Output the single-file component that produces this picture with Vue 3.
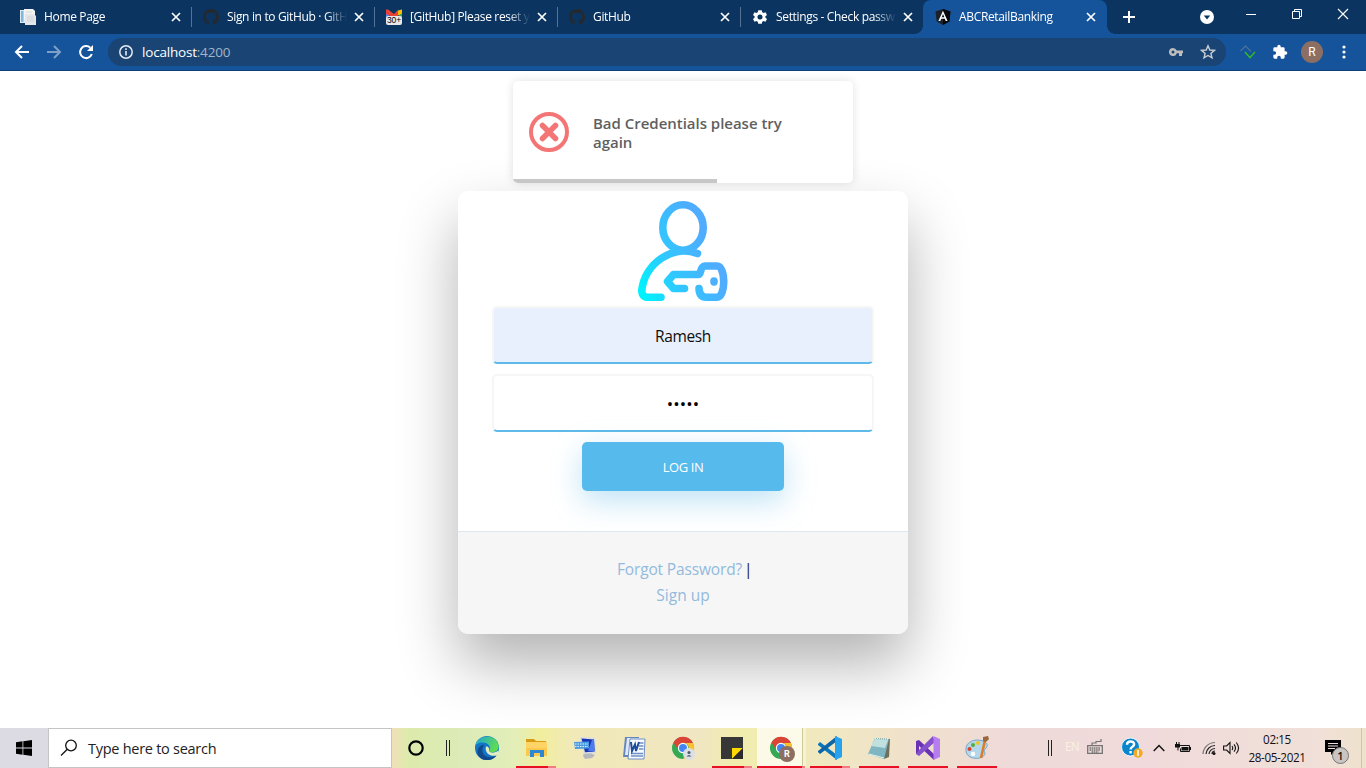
<script setup>
import { ref } from 'vue'

const tabs = [
  { title: 'Home Page', icon: 'page' },
  { title: 'Sign in to GitHub · GitH', icon: 'github' },
  { title: '[GitHub] Please reset y', icon: 'gmail' },
  { title: 'GitHub', icon: 'github' },
  { title: 'Settings - Check passw', icon: 'gear' },
  { title: 'ABCRetailBanking', icon: 'angular', active: true },
]
const user = ref('Ramesh')
const password = ref('admin')
</script>

<template>
  <div class="screen">
    <header class="tabstrip">
      <div v-for="(t, i) in tabs" :key="i" class="tab" :class="{ active: t.active, sep: i < 4 }">
        <svg v-if="t.icon === 'page'" class="fav" viewBox="0 0 16 16">
          <path d="M0 1h8v13H0z" fill="#dfe9f0" /><path d="M1 2h2.500v11H1z" fill="#7db7e2" />
          <path d="M4 0h9l2 2v9H4z" fill="#f4f4f4" /><path d="M5 5h9l2 2v9H5z" fill="#e4e6e8" />
          <path d="M7 8h7M7 10h7M7 12h7M6 3h6" stroke="#d3d6da" />
        </svg>
        <svg v-else-if="t.icon === 'github'" class="fav" viewBox="0 0 16 16">
          <path fill="#24292e" d="M8 0C3.58 0 0 3.58 0 8c0 3.54 2.29 6.53 5.47 7.59.4.07.55-.17.55-.38 0-.19-.01-.82-.01-1.49-2.01.37-2.53-.49-2.69-.94-.09-.23-.48-.94-.82-1.13-.28-.15-.68-.52-.01-.53.63-.01 1.08.58 1.23.82.72 1.21 1.87.87 2.33.66.07-.52.28-.87.51-1.07-1.78-.2-3.64-.89-3.64-3.95 0-.87.31-1.59.82-2.15-.08-.2-.36-1.02.08-2.12 0 0 .67-.21 2.2.82.64-.18 1.32-.27 2-.27s1.36.09 2 .27c1.53-1.04 2.2-.82 2.2-.82.44 1.1.16 1.92.08 2.12.51.56.82 1.27.82 2.15 0 3.07-1.87 3.75-3.65 3.95.29.25.54.73.54 1.48 0 1.07-.01 1.93-.01 2.2 0 .21.15.46.55.38A8.01 8.01 0 0 0 16 8c0-4.42-3.58-8-8-8z" />
        </svg>
        <span v-else-if="t.icon === 'gmail'" class="gmail">
          <svg class="fav" viewBox="0 0 16 16">
            <path d="M0 3h3v8H0z" fill="#4285f4" /><path d="M13 3h3v8h-3z" fill="#34a853" />
            <path d="M12 1.500l4-1v4l-4 2z" fill="#fbbc04" /><path d="M0 .5h2L8 5l4-4v6L8 9 0 5z" fill="#ea4335" />
          </svg>
          <b>30+</b>
        </span>
        <svg v-else-if="t.icon === 'gear'" class="fav" viewBox="0 0 24 24">
          <path fill="#fff" d="M20.100 13.200a8 8 0 0 0 0-2.400l2.400-1.900-2.300-4-2.900 1.200a8 8 0 0 0-2.100-1.200L14.700 2H9.300l-.5 2.900a8 8 0 0 0-2.100 1.200L3.800 4.900l-2.300 4 2.400 1.900a8 8 0 0 0 0 2.400l-2.400 1.900 2.300 4 2.900-1.200a8 8 0 0 0 2.100 1.200l.5 2.900h5.400l.5-2.900a8 8 0 0 0 2.100-1.200l2.900 1.200 2.300-4zM12 15.800a3.800 3.800 0 1 1 0-7.600 3.800 3.800 0 0 1 0 7.600z" />
        </svg>
        <svg v-else class="fav" viewBox="0 0 16 16">
          <path d="M8 0l7.500 2.600-1.200 10L8 16l-6.300-3.400-1.200-10z" fill="#1d2127" /><path d="M8 0l7.500 2.600-1.200 10L8 16z" fill="#05070a" />
          <path d="M8 1.700L3.400 12h1.900l.9-2.300h3.600l.9 2.300h1.900zm0 3.300l1.300 3.200H6.700z" fill="#fff" />
        </svg>
        <span class="title">{{ t.title }}</span>
        <svg class="close" viewBox="0 0 10 10"><path d="M1 1l8 8M9 1l-8 8" stroke="#fff" stroke-width="1.700" /></svg>
      </div>
      <svg class="plus" viewBox="0 0 12 12"><path d="M6 0v12M0 6h12" stroke="#fff" stroke-width="2" /></svg>
      <div class="winctl">
        <svg class="c-drop" viewBox="0 0 14 14"><circle cx="7" cy="7" r="7" fill="#fff" /><path d="M3.800 5.500h6.400L7 9.500z" fill="#0b3560" /></svg>
        <svg class="c-win" viewBox="0 0 12 12"><path d="M1 6.500h10" stroke="#fff" /></svg>
        <svg class="c-win" viewBox="0 0 12 12"><path d="M1.500 3.500h7v7h-7zM3.500 3V1.500h7v7H9" fill="none" stroke="#fff" /></svg>
        <svg class="c-win" viewBox="0 0 12 12"><path d="M1 1l10 10M11 1L1 11" stroke="#fff" stroke-width="1.100" /></svg>
      </div>
    </header>

    <nav class="toolbar">
      <svg class="nav" viewBox="0 0 16 16"><path d="M15 8H2M8 2L2 8l6 6" fill="none" stroke="#fff" stroke-width="2" /></svg>
      <svg class="nav" viewBox="0 0 16 16"><path d="M1 8h13M8 2l6 6-6 6" fill="none" stroke="#7fa0c8" stroke-width="2" /></svg>
      <svg class="nav" viewBox="0 0 16 16"><path d="M13.800 10A6 6 0 1 1 12.300 3.800" fill="none" stroke="#fff" stroke-width="2" /><path d="M15 1v6H9z" fill="#fff" /></svg>
      <div class="omnibox">
        <svg class="info" viewBox="0 0 14 14"><circle cx="7" cy="7" r="6.200" fill="none" stroke="#e6ebf1" stroke-width="1.500" /><path d="M7 6v4.500M7 3.300v1.600" stroke="#e6ebf1" stroke-width="1.600" /></svg>
        <span class="url">localhost<i>:4200</i></span>
        <svg class="key" viewBox="0 0 14 8"><path fill="#bdbdbd" fill-rule="evenodd" d="M4 0a4 4 0 1 0 3.800 5.200H10V8h3V5.200h1V2.600H7.700A4 4 0 0 0 4 0zm0 2.500a1.500 1.500 0 1 1 0 3 1.500 1.500 0 0 1 0-3z" /></svg>
        <svg class="star" viewBox="0 0 16 16"><path d="M8 1.800l1.800 4.200 4.600.4-3.500 3 1.100 4.500-4-2.400-4 2.400 1.100-4.500-3.500-3 4.600-.4z" fill="none" stroke="#cbcfd4" stroke-width="1.400" /></svg>
      </div>
      <svg class="ext" viewBox="0 0 16 16"><path d="M.5 7L5.500 2 11 7.500" fill="none" stroke="#45719d" stroke-width="1.300" /><path d="M5 8l5 5.500L15 8" fill="none" stroke="#2fb62f" stroke-width="1.600" /></svg>
      <svg class="puzzle" viewBox="0 0 24 24"><path fill="#fff" d="M20.500 11H19V7a2 2 0 0 0-2-2h-4V3.500a2.500 2.500 0 0 0-5 0V5H4a2 2 0 0 0-2 2v3.800h1.500a2.700 2.700 0 0 1 0 5.400H2V20a2 2 0 0 0 2 2h3.800v-1.500a2.700 2.700 0 0 1 5.400 0V22H17a2 2 0 0 0 2-2v-4h1.500a2.500 2.500 0 0 0 0-5z" /></svg>
      <span class="avatar">R</span>
      <svg class="dots" viewBox="0 0 4 14"><g fill="#fff"><circle cx="2" cy="2" r="1.600" /><circle cx="2" cy="7" r="1.600" /><circle cx="2" cy="12" r="1.600" /></g></svg>
    </nav>

    <main class="page">
      <section class="toast">
        <svg class="bad" viewBox="0 0 40 40"><circle cx="20" cy="20" r="18" fill="none" stroke="#f47575" stroke-width="4" /><path d="M13.500 13.500l13 13M26.500 13.500l-13 13" stroke="#f47575" stroke-width="5.500" stroke-linecap="round" /></svg>
        <p>Bad Credentials please try<br />again</p>
        <div class="progress"></div>
      </section>

      <section class="card">
        <form class="form" @submit.prevent>
          <svg class="usericon" viewBox="0 0 90 100">
            <defs><linearGradient id="g" x1="3" y1="90" x2="75" y2="58" gradientUnits="userSpaceOnUse"><stop offset="0" stop-color="#00f2fe" /><stop offset=".45" stop-color="#2fc8ff" /><stop offset="1" stop-color="#4facfe" /></linearGradient></defs>
            <g fill="none" stroke="url(#g)" stroke-width="7.600" stroke-linecap="round" stroke-linejoin="round">
              <ellipse cx="45" cy="26.500" rx="20.200" ry="22.700" />
              <path d="M59.500 52.500C35 43 7 62 3.800 89q-.2 7.200 6.200 7.200h13" />
              <path d="M46.500 87.500H35.500L29.500 80.500 35.500 73.500H61C63 73.500 62 65 67 65H79C88 65 88 96.200 79 96.200H68Q61.500 96.200 61 87.500" />
            </g>
            <ellipse cx="76" cy="80.500" rx="3.800" ry="4.200" fill="#4db0fe" />
          </svg>
          <input v-model="user" class="field filled" type="text" />
          <input v-model="password" class="field secret" type="password" />
          <button class="login" type="submit">LOG IN</button>
        </form>
        <footer class="links">
          <div class="row"><a class="forgot">Forgot Password?</a><span class="pipe">|</span></div>
          <div class="row"><a>Sign up</a></div>
        </footer>
      </section>
    </main>

    <footer class="taskbar">
      <div class="start"><svg viewBox="0 0 16 16"><path d="M0 2.200L6.500 1.300V7.600H0zM7.300 1.200L16 0v7.600H7.300zM0 8.400h6.500v6.300L0 13.800zM7.300 8.400H16V16l-8.700-1.200z" fill="#000" /></svg></div>
      <div class="search">
        <svg viewBox="0 0 18 18"><circle cx="11" cy="6.500" r="5.300" fill="none" stroke="#111" stroke-width="1.300" /><path d="M7.300 10.300L1 16.500" stroke="#111" stroke-width="1.300" /></svg>
        <span>Type here to search</span>
      </div>
      <div class="cortana"><svg viewBox="0 0 16 16"><circle cx="8" cy="8" r="6.700" fill="none" stroke="#000" stroke-width="2.200" /></svg></div>
      <div class="grip"></div>
      <div class="apps">
        <div class="app">
          <svg viewBox="0 0 24 24">
            <defs><linearGradient id="eg" x1="0" y1="0" x2="1" y2=".4"><stop offset="0" stop-color="#1ba4dd" /><stop offset="1" stop-color="#5fdc52" /></linearGradient></defs>
            <circle cx="12" cy="12" r="12" fill="#1275c9" />
            <path d="M0 11C1-1 20-4 23.500 9c1.500 7-7 9-9.500 6.500 2-3 1-7-3-8.500C6 5.500 1 7 0 11z" fill="url(#eg)" />
            <path d="M8 11c-3 8 5 13 13.500 8.500C18 24.500 11 25.500 6 22.500 0 18 2 10 9 8.500z" fill="#114a8b" />
            <path d="M11 10.500c2.500-.5 4 2.500 3 5 2 1.800 6 1.500 9.500-1l.5 3.500-2.500 1.500c-5 1.500-12.500-2-10.500-9z" fill="#e3edc2" />
          </svg>
        </div>
        <div class="app">
          <svg viewBox="0 0 24 24"><path d="M2 3h8l2 2h10v5H2z" fill="#d89b12" /><path d="M2 6h21v14H2z" fill="#ffd467" /><path d="M2 12h21v8H2z" fill="#fbc94d" /><path d="M6 21v-7h14v7h-4v-4h-6v4z" fill="#2f87d1" /></svg>
          <i class="bar"></i><i class="bar light"></i>
        </div>
        <div class="app">
          <svg viewBox="0 0 24 24"><path d="M11 17l7-1 1 2 3 1-3 3-7 1-2-3z" fill="#b4b9bd" /><path d="M7 1l15 1 1 15-12 1z" fill="#d7dbe2" /><path d="M8.500 2.500l12.500 1 .7 12-9.700.8z" fill="#1636b5" /><path d="M15 15l4-11 2 0 .5 11z" fill="#4c7bef" /><path d="M1 6l15-.5v7L2 13z" fill="#4b9ce2" /><path d="M2 8h13M2 10.500h13" stroke="#d9efff" stroke-dasharray="1.500 1" /></svg>
        </div>
        <div class="app">
          <svg viewBox="0 0 24 24"><path d="M3 1h14l-2 20H1z" fill="#6488bd" /><path d="M5 2h12l-2 17H3z" fill="#dfe9f7" /><path d="M8 3h15l-1 20H6z" fill="#f8fbff" stroke="#6f8fc2" /><path d="M17 7h4.500M17 10h4.500M17 13h4.500M9 17.500h12M9 20h12" stroke="#6f90c4" stroke-width="1.300" /><path d="M9 6l1 9 3-6.500L14 15l3-9" fill="none" stroke="#1d4c9b" stroke-width="2" /></svg>
        </div>
        <div class="app">
          <svg viewBox="0 0 24 24"><circle cx="12" cy="12" r="11" fill="#34a853" /><path d="M2.500 6.500A11 11 0 0 1 22 7H12a5 5 0 0 0-4.500 7z" fill="#dc4437" /><path d="M22 7a11 11 0 0 1-10 16l4.500-8A5 5 0 0 0 14 7z" fill="#fbc02d" /><circle cx="12" cy="12" r="5.200" fill="#fff" /><circle cx="12" cy="12" r="4" fill="#4285f4" /><circle cx="18" cy="18" r="6" fill="#dce0e4" /><circle cx="18" cy="16.500" r="1.500" fill="#4a5969" /><path d="M15.500 20.500q2.500-3 5 0z" fill="#4a5969" /></svg>
        </div>
        <div class="app">
          <svg viewBox="0 0 24 24"><path d="M1 1h22v22H1z" fill="#373737" /><path d="M12 23V12h11z" fill="#ffd900" /><path d="M12 23l11-11v11z" fill="#2b2b2b" /></svg>
          <i class="bar"></i><i class="bar light"></i>
        </div>
        <div class="app current">
          <svg viewBox="0 0 24 24"><circle cx="12" cy="12" r="11" fill="#34a853" /><path d="M2.500 6.500A11 11 0 0 1 22 7H12a5 5 0 0 0-4.500 7z" fill="#dc4437" /><path d="M22 7a11 11 0 0 1-10 16l4.500-8A5 5 0 0 0 14 7z" fill="#fbc02d" /><circle cx="12" cy="12" r="5.200" fill="#fff" /><circle cx="12" cy="12" r="4" fill="#4285f4" /></svg>
          <b class="badge">R</b>
          <i class="bar"></i><i class="bar light"></i>
        </div>
        <div class="app">
          <svg viewBox="0 0 24 24"><path d="M0 8l2-2 17 13v5L0 9z" fill="#0a77bd" /><path d="M0 16l2 2L19 5V0L0 15z" fill="#0c65a8" /><path d="M17 0l7 3v18l-7 3z" fill="#26a3ef" /></svg>
          <i class="bar"></i><i class="bar light"></i>
        </div>
        <div class="app">
          <svg viewBox="0 0 24 24"><path d="M8 2l15 1-1 18-5 2z" fill="#6f705c" /><path d="M8 2l14 1-5 20-16-5z" fill="#7fb6c1" /><path d="M8 3l13 1-3 8-14-2z" fill="#c1e1df" /><path d="M2 18l15 4" stroke="#e4f4f2" /><path d="M8 2l14 1" stroke="#e9e9e9" stroke-width="2" stroke-dasharray="1 1" /></svg>
          <i class="bar full"></i>
        </div>
        <div class="app">
          <svg viewBox="0 0 24 24"><path d="M0 5l3-1 16 15-1 5L3 10v7l-3 1z" fill="#6a33b5" /><path d="M0 18l3 2L19 6l-2-6L3 14z" fill="#8550cc" /><path d="M17.500 0l6.500 3v18l-6.500 3z" fill="#b77df0" /></svg>
          <i class="bar full"></i>
        </div>
        <div class="app">
          <svg viewBox="0 0 24 24"><path d="M1 14C0 6 10 2 18 5c5 2 5 5 3 7s-2 3-1 5c0 5-9 7-15 4-3-2-4-4-4-7z" fill="#b5d7ec" stroke="#75a8cb" /><circle cx="8" cy="9" r="2" fill="#54ae35" /><circle cx="13" cy="7" r="2" fill="#f3c524" /><circle cx="4.500" cy="13" r="2" fill="#d9432f" /><circle cx="8" cy="18" r="2.200" fill="#fff" /><path d="M20 4l-4 18" stroke="#df7b24" stroke-width="2.500" /><path d="M18 1l5-1 1 3-3 3-3-1z" fill="#99683c" /></svg>
          <i class="bar full"></i>
        </div>
      </div>
      <div class="tray">
        <div class="grip tgrip"></div>
        <span class="lang">EN</span>
        <svg class="kbd" viewBox="0 0 16 15"><path d="M.7 6.700h14.600v7.600H.7z" fill="none" stroke="#747474" stroke-width="1.300" /><path d="M2.500 9h11M2.500 11h11M4.500 13h7" stroke="#747474" stroke-width="1.400" stroke-dasharray="1.600 .6" /><path d="M5 6V4h4V2.500h5V0" fill="none" stroke="#747474" stroke-width="1.200" /></svg>
        <svg class="help" viewBox="0 0 22 22"><circle cx="9.500" cy="10" r="9" fill="#0a86cd" stroke="#e9f7fb" /><path d="M6 7.800q0-3.300 3.600-3.300c4 0 4.500 3.600 1.800 5.200Q9.600 10.700 9.600 12.500M9.600 14v2.500" fill="none" stroke="#fff" stroke-width="2.400" /><circle cx="17" cy="16" r="4.700" fill="#f1aa26" /><path d="M17 13v6" stroke="#fff" stroke-width="1.500" /></svg>
        <svg class="up" viewBox="0 0 12 8"><path d="M.7 7L6 1.500 11.300 7" fill="none" stroke="#111" stroke-width="1.400" /></svg>
        <svg class="batt" viewBox="0 0 16 12"><path d="M4.500 3.500h10v6h-9v-3" fill="none" stroke="#111" /><path d="M6.500 5h7v3.500h-7zM15 5h1v3h-1zM0 2h5v3.500H3.500v3h-1v-3H0zM1 0h1v2H1zM3.500 0h1v2h-1z" fill="#111" /></svg>
        <svg class="wifi" viewBox="0 0 14 14"><g fill="none" stroke="#222" stroke-width="1.200"><path d="M1 13A12 12 0 0 1 13 1.500" stroke="#777" /><path d="M4 13a9 9 0 0 1 9-8.500M7 13a6 6 0 0 1 6-5.500M10 13a3 3 0 0 1 3-3" /></g><circle cx="12" cy="12.500" r="1.500" fill="#111" /></svg>
        <svg class="vol" viewBox="0 0 17 14"><path d="M.6 5h3L7 1.500v11L3.600 9h-3z" fill="none" stroke="#111" stroke-width="1.100" /><path d="M9 5q1.500 2 0 4M11 3.300q3 3.700 0 7.400M13.300 1.500q4.500 5.500 0 11" fill="none" stroke="#111" stroke-width="1.100" /></svg>
        <div class="clock"><span>02:15</span><span>28-05-2021</span></div>
        <div class="notif">
          <svg viewBox="0 0 16 16"><path d="M0 0h16v12H9l-3 3v-3H0z" fill="#000" /><path d="M3 3.500h10M3 6h10M3 8.500h7" stroke="#eedfd8" /></svg>
          <b>1</b>
        </div>
        <div class="peek"></div>
      </div>
    </footer>
  </div>
</template>

<style>
html, body { margin: 0; overflow: hidden; }
</style>

<style scoped>
* { box-sizing: border-box; }
svg { display: block; flex: none; }
.screen { width: 1366px; height: 768px; display: flex; flex-direction: column; overflow: hidden; background: #fff; font-family: "Open Sans", "Noto Sans", sans-serif; }

.tabstrip { height: 34px; flex: none; background: #0b3560; display: flex; padding-left: 8px; }
.tab { position: relative; width: 183px; height: 34px; padding: 0 10px 0 12px; display: flex; align-items: center; color: #fff; flex: none; }
.tab.sep::after { content: ""; position: absolute; right: -1px; top: 7px; width: 1px; height: 20px; background: #547293; }
.tab.active { width: 184px; background: #15539b; border-radius: 8px 8px 0 0; }
.tab.active::before, .tab.active::after { content: ""; position: absolute; bottom: 0; width: 8px; height: 8px; }
.tab.active::before { left: -8px; background: radial-gradient(circle at 0 0, #0b3560 7.500px, #15539b 8px); }
.tab.active::after { right: -8px; background: radial-gradient(circle at 100% 0, #0b3560 7.500px, #15539b 8px); }
.fav { width: 16px; height: 16px; }
.gmail { position: relative; height: 16px; }
.gmail b { position: absolute; left: 0; top: 7px; width: 16px; height: 9px; background: #e8e8e8; border-radius: 2px; color: #000; font: 8.500px/9px "Liberation Sans", sans-serif; text-align: center; letter-spacing: -.2px; }
.title { flex: none; width: 122px; margin-left: 8px; white-space: nowrap; font-size: 12px; line-height: 18px; letter-spacing: -.34px; -webkit-mask-image: linear-gradient(90deg, #000 98px, transparent 120px); mask-image: linear-gradient(90deg, #000 98px, transparent 120px); }
.close { width: 10px; height: 10px; margin-left: 5px; }
.plus { width: 12px; height: 12px; margin: 11px 0 0 16px; }
.winctl { margin-left: auto; display: flex; padding-right: 17px; }
.c-drop { width: 14px; height: 14px; margin: 10px 31px 0 0; }
.c-win { width: 12px; height: 12px; margin: 8px 0 0 34px; }
.c-win:nth-child(2) { margin-left: 0; }

.toolbar { height: 37px; flex: none; background: #15539b; border-bottom: 1px solid #0d4079; display: flex; align-items: center; padding-left: 14px; }
.nav { width: 16px; height: 16px; margin-right: 16px; }
.omnibox { width: 1118px; height: 28px; margin-left: -2px; border-radius: 14px; background: #194474; display: flex; align-items: center; padding: 0 10px 0 11px; flex: none; }
.info { width: 14px; height: 14px; }
.url { margin-left: 9px; font-size: 13.500px; color: #fff; line-height: 20px; letter-spacing: -.2px; }
.url i { font-style: normal; color: #a3b4c7; }
.key { width: 14px; height: 8px; margin-left: auto; }
.star { width: 16px; height: 16px; margin-left: 17px; }
.ext { width: 16px; height: 16px; margin-left: 14px; }
.puzzle { width: 16px; height: 16px; margin-left: 16px; }
.avatar { width: 22px; height: 22px; margin-left: 13px; border-radius: 50%; background: #8d6e63; color: #fff; font: 12px/22px Roboto, sans-serif; text-align: center; }
.dots { width: 4px; height: 14px; margin-left: 19px; }

.page { flex: 1; display: flex; flex-direction: column; align-items: center; overflow: hidden; }
.toast { position: relative; z-index: 1; width: 340px; height: 102px; margin-top: 10px; flex: none; background: #fff; border-radius: 5px; box-shadow: 0 0 10px rgba(0, 0, 0, .12); display: flex; align-items: center; padding-left: 16px; overflow: hidden; }
.bad { width: 40px; height: 40px; }
.toast p { margin: 1px 0 0 24px; font-size: 15px; line-height: 19px; font-weight: 600; color: #5f5f5f; letter-spacing: -.02px; }
.progress { position: absolute; left: 0; bottom: 0; width: 204px; height: 4px; background: #c7c7c7; }
.card { width: 450px; height: 443px; margin-top: 8px; flex: none; border-radius: 10px; background: #fff; box-shadow: 0 30px 60px rgba(0, 0, 0, .3); overflow: hidden; display: flex; flex-direction: column; }
.form { height: 340px; padding-top: 10px; display: flex; flex-direction: column; align-items: center; }
.usericon { width: 90px; height: 100px; }
.field { width: 382px; height: 58px; margin: 5px 0; border: 2px solid #f6f6f6; border-bottom-color: #5fbae9; border-radius: 5px; background: #fff; outline: 0; color: #0d0d0d; text-align: center; font-family: inherit; font-size: 15.500px; }
.field.filled { background: #e8f0fe; letter-spacing: -.35px; padding-top: 3px; }
.field.secret { font-size: 17px; letter-spacing: .1px; color: #000; }
.login { width: 202px; height: 49px; margin-top: 5px; border: 0; border-radius: 5px; background: #56baed; color: #fff; font-family: inherit; font-size: 13px; letter-spacing: -.4px; box-shadow: 0 10px 30px rgba(95, 186, 233, .4); padding: 0; }
.links { flex: 1; background: #f6f6f6; border-top: 1px solid #dce8f1; padding-top: 24px; font-size: 15.500px; line-height: 26px; color: #212529; }
.row { display: flex; justify-content: center; }
.links a { color: #92badd; }
.links .forgot { letter-spacing: -.15px; }
.pipe { width: 4px; margin: 0 -1px 0 4px; text-align: center; text-indent: -2px; }

.taskbar { height: 40px; flex: none; display: flex; background: linear-gradient(90deg, #dcdbe3 0, #dcdbe3 48px, #f0dfb9 392px, #dcebab 408px, #dcebb8 465px, #e3eeb8 515px, #f1ee9d 540px, #f1e9b7 570px, #f0e6c2 700px, #f1edad 735px, #f0e7c3 840px, #efdfcf 940px, #efdada 1010px, #f0dadb 1150px, #f0e0d8 1320px, #efe2cc 1366px); }
.start { width: 48px; display: grid; place-items: center; }
.start svg { width: 16px; height: 16px; }
.search { width: 344px; background: #fff; border: 1px solid #c4c4c4; display: flex; align-items: center; font-size: 14.500px; color: #222; letter-spacing: -.27px; }
.search svg { width: 18px; height: 18px; margin: 0 10px 0 11px; }
.cortana { width: 48px; display: grid; place-items: center; }
.cortana svg { width: 16px; height: 16px; }
.grip { width: 4px; height: 16px; margin: 12px 13px 0 6px; border: solid #222; border-width: 0 1px; flex: none; }
.apps { display: flex; }
.app { position: relative; width: 49px; height: 40px; flex: none; display: grid; place-items: center; }
.app > svg { width: 24px; height: 24px; margin-right: 1px; }
.bar { position: absolute; left: 4px; bottom: 0; width: 32px; height: 2px; background: #e81123; }
.bar.light { left: 36px; width: 8px; background: #f37a82; }
.bar.full { width: 40px; }
.current::before { content: ""; position: absolute; left: 0; top: 0; width: 45px; height: 40px; background: rgba(255, 255, 248, .75); border-right: 1px solid #cfc99a; box-shadow: 3px 0 0 rgba(255, 255, 248, .4); }
.current > svg { position: relative; }
.current .bar { left: 0; width: 45px; }
.current .bar.light { left: 45px; width: 3px; }
.badge { position: absolute; left: 22px; top: 18px; width: 16px; height: 16px; border-radius: 50%; background: #8d6e63; color: #fff; font: bold 9px/16px Roboto, sans-serif; text-align: center; }
.tray { margin-left: auto; width: 318px; display: flex; align-items: center; flex: none; }
.tgrip { margin: 0; }
.lang { width: 15px; margin: -4px 0 0 13px; font-size: 12px; color: #f8f1df; letter-spacing: -.8px; }
.kbd { width: 16px; height: 15px; margin: -4px 0 0 7px; }
.help { width: 22px; height: 22px; margin-left: 18px; }
.up { width: 12px; height: 8px; margin-left: 10px; }
.batt { width: 16px; height: 12px; margin-left: 10px; }
.wifi { width: 14px; height: 14px; margin-left: 11px; }
.vol { width: 17px; height: 14px; margin-left: 7px; }
.clock { width: 62px; margin-left: 6px; display: flex; flex-direction: column; align-items: center; font-size: 11.700px; line-height: 18px; letter-spacing: -.4px; color: #111; white-space: nowrap; }
.notif { position: relative; width: 16px; height: 16px; margin-left: 17px; }
.notif svg { width: 16px; height: 16px; }
.notif b { position: absolute; left: 7px; top: 7px; width: 17px; height: 17px; border: 1px solid #777; border-radius: 50%; background: #c9c5c3; color: #111; font: 600 11px/15px "Open Sans", sans-serif; text-align: center; }
.peek { width: 1px; height: 40px; margin-left: auto; margin-right: 4px; background: #cfc4b4; }
</style>
